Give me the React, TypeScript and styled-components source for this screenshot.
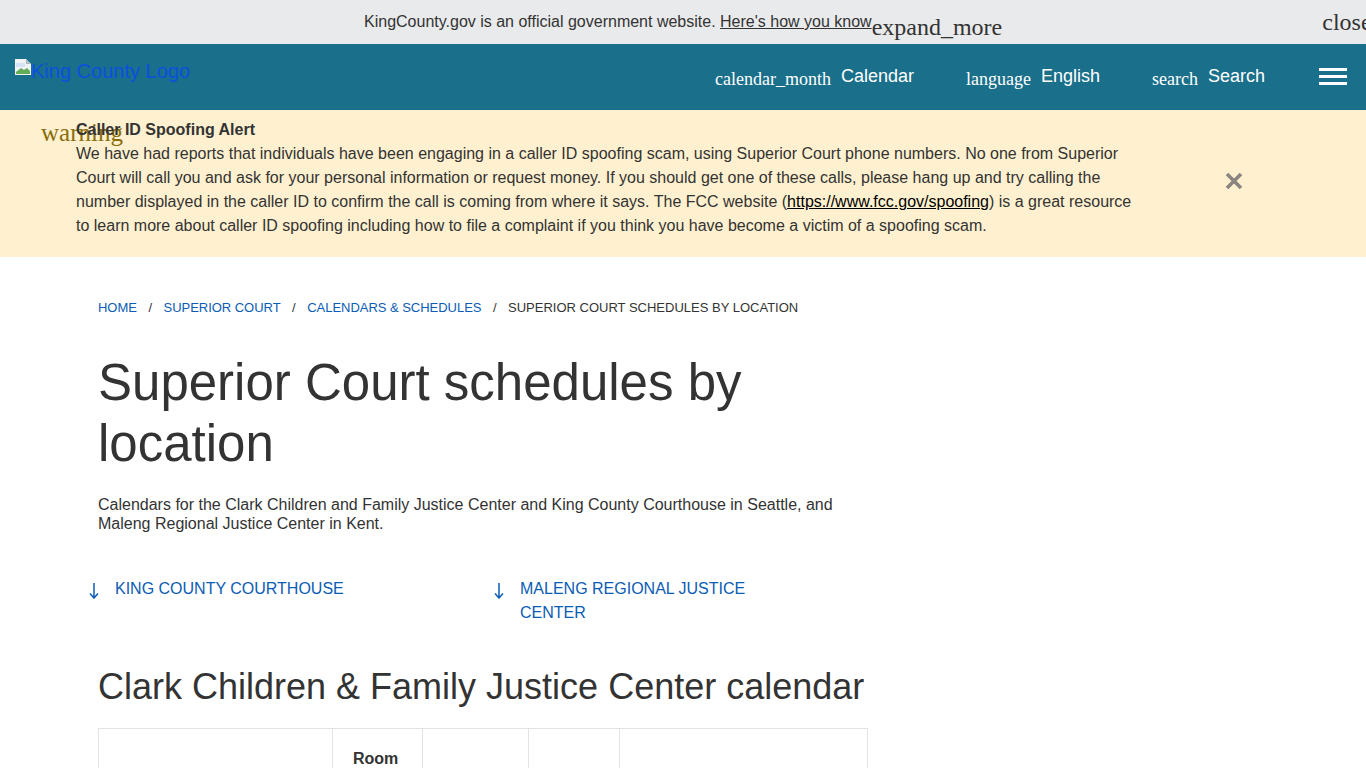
import * as React from "react";
import styled, { createGlobalStyle } from "styled-components";

const GlobalStyle = createGlobalStyle`
  html, body {
    margin: 0;
    padding: 0;
    height: 768px;
    overflow: hidden;
    background: #fff;
    font-family: "Liberation Sans", Arial, sans-serif;
    color: #333;
  }
`;

const navItems = [
  { icon: "calendar_month", label: "Calendar", width: 251 },
  { icon: "language", label: "English", width: 186 },
  { icon: "search", label: "Search", width: 167 },
];

const columns = [234, 90, 106, 91, 248];

function App() {
  return (
    <Page>
      <GlobalStyle />
      <GovBar>
        <GovText>
          KingCounty.gov is an official government website.{" "}
          <GovLink href="#">Here's how you know</GovLink>
        </GovText>
        <GovExpand>expand_more</GovExpand>
        <GovClose>close</GovClose>
      </GovBar>
      <Header>
        <LogoLink href="#">
          <BrokenImage viewBox="0 0 16 16">
            <path d="M0 0h11l5 5v11H0z" fill="#f1f3f5" />
            <path d="M11 0v5h5z" fill="#aeb8bf" />
            <path d="M1 4h9v4H1z" fill="#d5e3f6" />
            <path d="M1 15v-2l5-4 3 2 3-2 3 3v3z" fill="#5fae57" />
          </BrokenImage>
          King County Logo
        </LogoLink>
        <Nav>
          {navItems.map((item) => (
            <NavItem key={item.label} $width={item.width}>
              <NavIcon>{item.icon}</NavIcon>
              <NavLabel>{item.label}</NavLabel>
            </NavItem>
          ))}
          <Burger aria-label="Menu">
            <span />
            <span />
            <span />
          </Burger>
        </Nav>
      </Header>
      <Alert>
        <AlertIcon>warning</AlertIcon>
        <AlertBody>
          <AlertTitle>Caller ID Spoofing Alert</AlertTitle>
          We have had reports that individuals have been engaging in a caller ID spoofing scam,
          using Superior Court phone numbers. No one from Superior Court will call you and ask for
          your personal information or request money. If you should get one of these calls, please
          hang up and try calling the number displayed in the caller ID to confirm the call is
          coming from where it says. The FCC website (
          <AlertLink href="#">https://www.fcc.gov/spoofing</AlertLink>) is a great resource to learn
          more about caller ID spoofing including how to file a complaint if you think you have
          become a victim of a spoofing scam.
        </AlertBody>
        <AlertClose viewBox="0 0 18 18" aria-label="Close">
          <path d="M2 2l14 14M16 2L2 16" stroke="#8a8580" strokeWidth="3.6" />
        </AlertClose>
      </Alert>
      <Main>
        <Breadcrumbs>
          <Crumb href="#">HOME</Crumb>
          <Slash>/</Slash>
          <Crumb href="#">SUPERIOR COURT</Crumb>
          <Slash>/</Slash>
          <Crumb href="#">CALENDARS &amp; SCHEDULES</Crumb>
          <Slash>/</Slash>
          <CurrentCrumb>SUPERIOR COURT SCHEDULES BY LOCATION</CurrentCrumb>
        </Breadcrumbs>
        <Title>Superior Court schedules by location</Title>
        <Lead>
          Calendars for the Clark Children and Family Justice Center and King County Courthouse in
          Seattle, and Maleng Regional Justice Center in Kent.
        </Lead>
        <Anchors>
          <Anchor href="#">
            <ArrowDown viewBox="0 0 12 16">
              <path d="M6 0v15M2 10.5L6 15l4-4.5" />
            </ArrowDown>
            KING COUNTY COURTHOUSE
          </Anchor>
          <Anchor href="#">
            <ArrowDown viewBox="0 0 12 16">
              <path d="M6 0v15M2 10.5L6 15l4-4.5" />
            </ArrowDown>
            MALENG REGIONAL JUSTICE CENTER
          </Anchor>
        </Anchors>
        <SectionTitle>Clark Children &amp; Family Justice Center calendar</SectionTitle>
        <Table>
          <colgroup>
            {columns.map((width) => (
              <col key={width} width={width} />
            ))}
          </colgroup>
          <tbody>
            <tr>
              <Cell />
              <HeadCell>Room</HeadCell>
              <Cell />
              <Cell />
              <Cell />
            </tr>
          </tbody>
        </Table>
      </Main>
    </Page>
  );
}

const Page = styled.div`
  width: 1366px;
  height: 768px;
  overflow: hidden;
`;

const GovBar = styled.div`
  display: flex;
  height: 44px;
  box-sizing: border-box;
  padding-left: 364px;
  background: #e9eaeb;
  white-space: nowrap;
`;

const GovText = styled.div`
  padding-top: 13px;
  font-size: 16px;
  line-height: 18px;
  color: #333;
`;

const GovLink = styled.a`
  color: #333;
`;

const GovExpand = styled.span`
  padding-top: 13px;
  font-family: "Liberation Serif", serif;
  font-size: 24px;
  line-height: 28px;
  color: #333;
`;

const GovClose = styled.span`
  margin-left: 320px;
  padding-top: 8px;
  font-family: "Liberation Serif", serif;
  font-size: 24px;
  line-height: 28px;
  color: #333;
`;

const Header = styled.header`
  display: flex;
  justify-content: space-between;
  height: 66px;
  box-sizing: border-box;
  padding-left: 15px;
  background: #1a6f8a;
`;

const LogoLink = styled.a`
  display: flex;
  align-items: flex-start;
  height: 24px;
  margin-top: 15px;
  font-size: 20px;
  line-height: 24px;
  color: #0a50e0;
  text-decoration: none;
`;

const BrokenImage = styled.svg`
  width: 16px;
  height: 16px;
  flex: none;
`;

const Nav = styled.nav`
  display: flex;
  align-items: flex-start;
`;

const NavItem = styled.a<{ $width: number }>`
  display: flex;
  align-items: flex-start;
  width: ${(props) => props.$width}px;
  color: #fff;
  white-space: nowrap;
`;

const NavIcon = styled.span`
  margin-top: 25px;
  margin-right: 10px;
  font-family: "Liberation Serif", serif;
  font-size: 18px;
  line-height: 21px;
`;

const NavLabel = styled.span`
  margin-top: 22px;
  font-size: 18px;
  line-height: 21px;
`;

const Burger = styled.div`
  display: flex;
  flex-direction: column;
  justify-content: space-between;
  width: 28px;
  height: 17px;
  margin: 24px 19px 0 0;

  span {
    display: block;
    height: 3px;
    background: #fff;
  }
`;

const Alert = styled.section`
  display: flex;
  height: 147px;
  box-sizing: border-box;
  padding: 8px 0 0 41px;
  background: #fff1cf;
`;

const AlertIcon = styled.span`
  width: 35px;
  flex: none;
  margin-top: 1px;
  font-family: "Liberation Serif", serif;
  font-size: 25px;
  line-height: 28px;
  color: #8a6d0b;
`;

const AlertBody = styled.div`
  width: 1060px;
  flex: none;
  font-size: 16px;
  line-height: 24px;
  color: #333;
`;

const AlertTitle = styled.strong`
  display: block;
`;

const AlertLink = styled.a`
  color: #000;
`;

const AlertClose = styled.svg`
  width: 18px;
  height: 18px;
  flex: none;
  margin: 54px 0 0 89px;
`;

const Main = styled.main`
  width: 770px;
  margin-left: 98px;
`;

const Breadcrumbs = styled.nav`
  display: flex;
  padding-top: 43px;
  font-size: 13px;
  line-height: 16px;
  white-space: nowrap;
`;

const Crumb = styled.a`
  letter-spacing: -0.03px;
  color: #0b5cb5;
  text-decoration: none;
`;

const Slash = styled.span`
  margin: 0 11.5px;
  color: #333;
`;

const CurrentCrumb = styled.span`
  color: #333;
`;

const Title = styled.h1`
  width: 700px;
  margin: 36px 0 0;
  font-size: 51px;
  font-weight: 400;
  line-height: 61px;
  color: #333;
`;

const Lead = styled.p`
  margin: 21px 0 0;
  font-size: 16px;
  line-height: 19px;
  color: #333;
`;

const Anchors = styled.div`
  display: grid;
  grid-template-columns: 405px 275px;
  margin: 44px 0 0 -10px;
`;

const Anchor = styled.a`
  display: flex;
  font-size: 16px;
  line-height: 24px;
  color: #0b5cb5;
  text-decoration: none;
`;

const ArrowDown = styled.svg`
  width: 12px;
  height: 16px;
  flex: none;
  margin: 6px 15px 0 0;
  fill: none;
  stroke: #0b5cb5;
  stroke-width: 1.5;
`;

const SectionTitle = styled.h2`
  margin: 40px 0 0;
  font-size: 36px;
  font-weight: 400;
  line-height: 44px;
  color: #333;
  white-space: nowrap;
`;

const Table = styled.table`
  width: 769px;
  margin-top: 19px;
  table-layout: fixed;
  border-collapse: collapse;
`;

const Cell = styled.td`
  height: 60px;
  border: 1px solid #e3e3e3;
`;

const HeadCell = styled.th`
  padding: 20px 0 0 20px;
  vertical-align: top;
  text-align: left;
  border: 1px solid #e3e3e3;
  font-size: 16px;
  line-height: 19px;
  color: #333;
`;

export default App;
